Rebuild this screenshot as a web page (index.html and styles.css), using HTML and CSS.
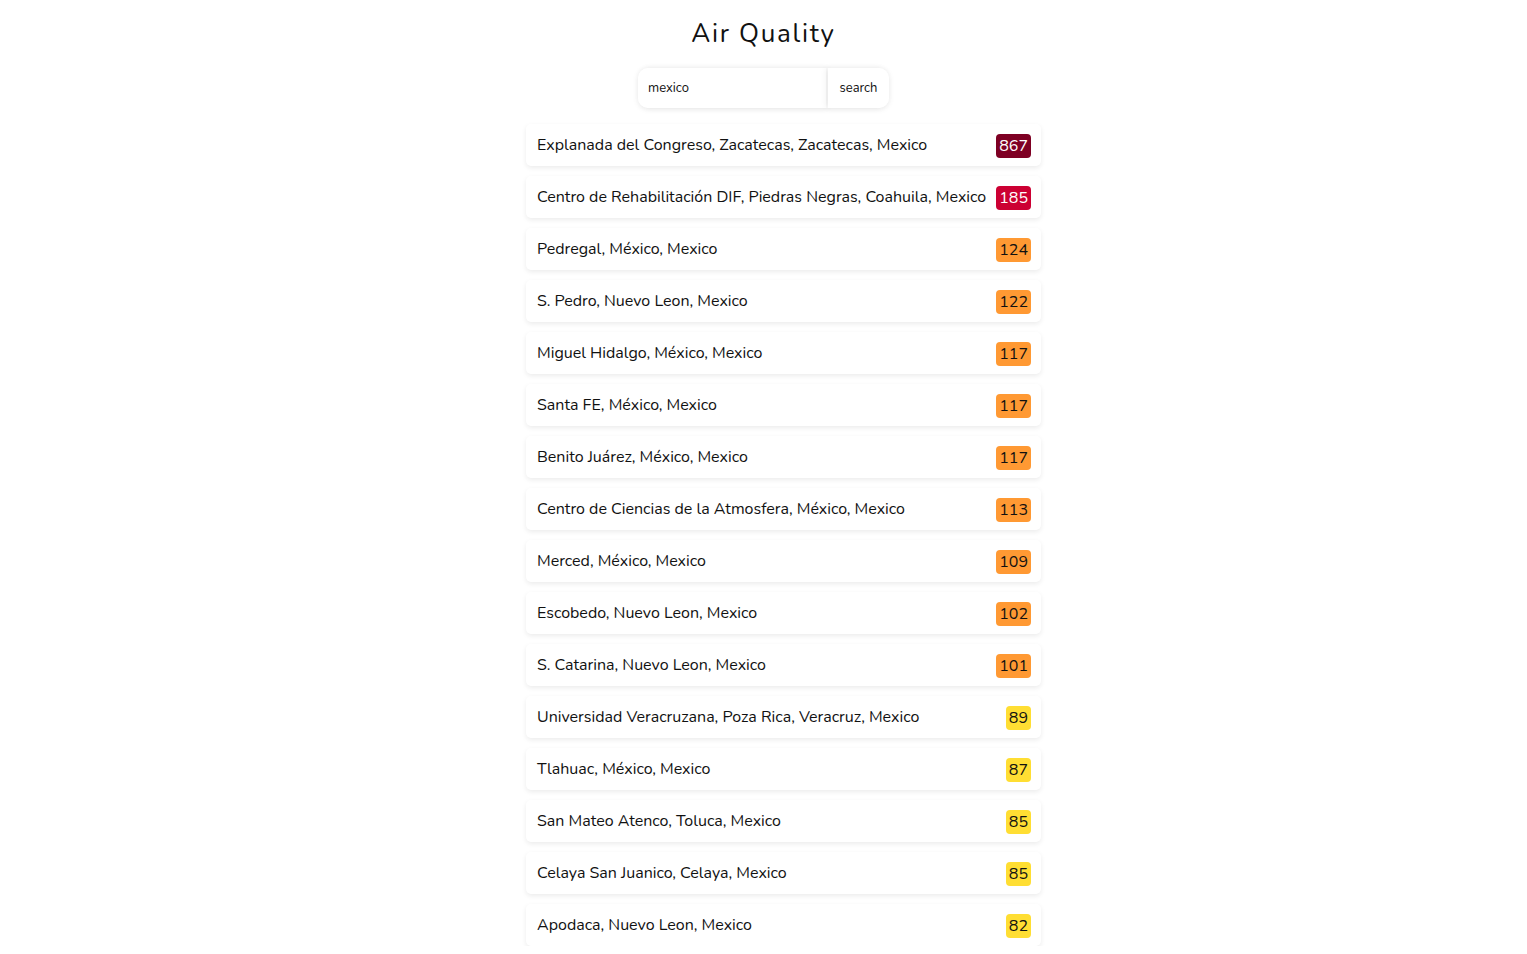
FILE: index.html
```html
<!DOCTYPE html>
<html lang="en">
<head>
<meta charset="utf-8">
<title>Air Quality</title>
<link rel="stylesheet" href="styles.css">
</head>
<body>
<main class="app">
  <h1 class="title">Air Quality</h1>
  <form class="search">
    <input class="search-input" type="text" value="mexico">
    <button class="search-btn" type="button">search</button>
  </form>
  <ul class="stations">
    <li class="station"><span class="name">Explanada del Congreso, Zacatecas, Zacatecas, Mexico</span><span class="aqi hazardous">867</span></li>
    <li class="station"><span class="name">Centro de Rehabilitación DIF, Piedras Negras, Coahuila, Mexico</span><span class="aqi unhealthy">185</span></li>
    <li class="station"><span class="name">Pedregal, México, Mexico</span><span class="aqi sensitive">124</span></li>
    <li class="station"><span class="name">S. Pedro, Nuevo Leon, Mexico</span><span class="aqi sensitive">122</span></li>
    <li class="station"><span class="name">Miguel Hidalgo, México, Mexico</span><span class="aqi sensitive">117</span></li>
    <li class="station"><span class="name">Santa FE, México, Mexico</span><span class="aqi sensitive">117</span></li>
    <li class="station"><span class="name">Benito Juárez, México, Mexico</span><span class="aqi sensitive">117</span></li>
    <li class="station"><span class="name">Centro de Ciencias de la Atmosfera, México, Mexico</span><span class="aqi sensitive">113</span></li>
    <li class="station"><span class="name">Merced, México, Mexico</span><span class="aqi sensitive">109</span></li>
    <li class="station"><span class="name">Escobedo, Nuevo Leon, Mexico</span><span class="aqi sensitive">102</span></li>
    <li class="station"><span class="name">S. Catarina, Nuevo Leon, Mexico</span><span class="aqi sensitive">101</span></li>
    <li class="station"><span class="name">Universidad Veracruzana, Poza Rica, Veracruz, Mexico</span><span class="aqi moderate">89</span></li>
    <li class="station"><span class="name">Tlahuac, México, Mexico</span><span class="aqi moderate">87</span></li>
    <li class="station"><span class="name">San Mateo Atenco, Toluca, Mexico</span><span class="aqi moderate">85</span></li>
    <li class="station"><span class="name">Celaya San Juanico, Celaya, Mexico</span><span class="aqi moderate">85</span></li>
    <li class="station"><span class="name">Apodaca, Nuevo Leon, Mexico</span><span class="aqi moderate">82</span></li>
  </ul>
</main>
</body>
</html>
```
FILE: styles.css
```css
html, body {
  margin: 0;
  padding: 0;
  background: #ffffff;
}

body {
  font-family: "Nunito", "Lato", "Noto Sans", sans-serif;
  color: #111111;
}

.app {
  display: flex;
  flex-direction: column;
  align-items: center;
}

.title {
  margin: 16px 0 0;
  font-size: 26px;
  font-weight: 400;
  letter-spacing: 1.7px;
  line-height: 36px;
  color: #111111;
}

.search {
  display: flex;
  width: 251px;
  height: 40px;
  margin-top: 16px;
  border-radius: 10px;
  box-shadow: 0 1px 6px rgba(0, 0, 0, 0.08);
  background: #ffffff;
}

.search-input {
  flex: 1;
  min-width: 0;
  border: none;
  outline: none;
  padding: 0 10px;
  font-family: inherit;
  font-size: 13px;
  color: #111111;
  background: #ffffff;
  border-radius: 10px 0 0 10px;
  box-shadow: 2px 0 6px rgba(0, 0, 0, 0.06);
}

.search-btn {
  width: 61px;
  border: none;
  padding: 0;
  margin-left: 2px;
  font-family: inherit;
  font-size: 13px;
  color: #111111;
  background: #ffffff;
  border-radius: 0 10px 10px 0;
  box-shadow: -2px 0 6px rgba(0, 0, 0, 0.06);
}

.stations {
  list-style: none;
  margin: 16px 0 0;
  padding: 0 0 0 40px;
  width: 515px;
  display: flex;
  flex-direction: column;
  gap: 10px;
}

.station {
  height: 42px;
  display: flex;
  align-items: center;
  justify-content: space-between;
  padding: 0 10px 0 11px;
  background: #ffffff;
  border-radius: 5px;
  box-shadow: 0 2px 5px rgba(0, 0, 0, 0.08);
  font-size: 16px;
}

.name {
  white-space: nowrap;
}

.aqi {
  line-height: 24px;
  padding: 0 3px;
  border-radius: 4px;
  font-size: 16px;
  margin-top: 1px;
}

.hazardous { background: #7e0023; color: #ffffff; }
.unhealthy { background: #cc0033; color: #ffffff; }
.sensitive { background: #ff9933; color: #111111; }
.moderate { background: #ffde33; color: #111111; }
```
